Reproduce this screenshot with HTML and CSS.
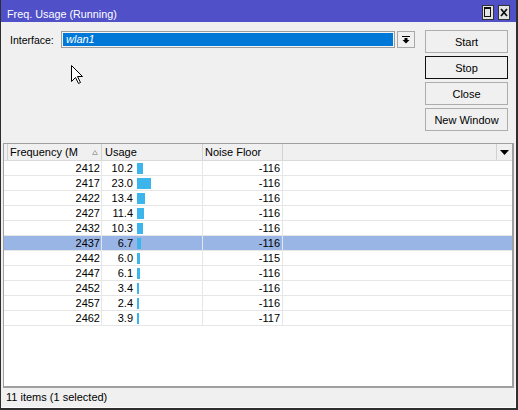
FILE: index.html
```html
<!DOCTYPE html>
<html>
<head>
<meta charset="utf-8">
<link rel="stylesheet" href="styles.css">
</head>
<body>
<div class="window">
  <div class="titlebar">
    <span class="title">Freq. Usage (Running)</span>
    <div class="tb-buttons">
      <svg class="tb-btn" width="12" height="15" viewBox="0 0 12 15"><rect x="0.5" y="0.5" width="11" height="14" fill="#e4e4e4" stroke="#333"/><rect x="2.5" y="2.5" width="6" height="9" fill="none" stroke="#111"/><line x1="2" y1="3.5" x2="9" y2="3.5" stroke="#111"/></svg>
      <svg class="tb-btn" width="12" height="15" viewBox="0 0 12 15"><rect x="0.5" y="0.5" width="11" height="14" fill="#e4e4e4" stroke="#333"/><path d="M3 4 L9 11 M9 4 L3 11" stroke="#111" stroke-width="1.8"/></svg>
    </div>
  </div>
  <div class="top">
    <div class="form">
      <span class="label">Interface:</span>
      <div class="select"><span class="sel-text">wlan1</span></div>
      <div class="drop"><svg width="8" height="8" viewBox="0 0 8 8"><rect x="0" y="0" width="8" height="1" fill="#000"/><rect x="2.5" y="2" width="3" height="2" fill="#000"/><path d="M0.5 4 L7.5 4 L4 7.5 Z" fill="#000"/></svg></div>
    </div>
    <div class="buttons">
      <button class="btn">Start</button>
      <button class="btn default">Stop</button>
      <button class="btn">Close</button>
      <button class="btn">New Window</button>
    </div>
  </div>
  <div class="table">
    <div class="thead">
      <div class="th gutter"></div>
      <div class="th freq-h"><span>Frequency (M</span><svg class="sort" width="6" height="5" viewBox="0 0 6 5"><path d="M3 0.5 L5.5 4.5 L0.5 4.5 Z" fill="none" stroke="#a8a8a8"/></svg></div>
      <div class="th usage-h">Usage</div>
      <div class="th">Noise Floor</div>
      <div class="th"></div>
      <div class="th th-drop"><svg width="9" height="5" viewBox="0 0 9 5"><path d="M0 0 L9 0 L4.5 5 Z" fill="#000"/></svg></div>
    </div>
    <div class="tbody">
      <div class="row"><div class="td num">2412</div><div class="td usage"><span class="val">10.2</span><span class="bar" style="width:6px"></span></div><div class="td noise">-116</div><div class="td last"></div></div>
      <div class="row"><div class="td num">2417</div><div class="td usage"><span class="val">23.0</span><span class="bar" style="width:14px"></span></div><div class="td noise">-116</div><div class="td last"></div></div>
      <div class="row"><div class="td num">2422</div><div class="td usage"><span class="val">13.4</span><span class="bar" style="width:8px"></span></div><div class="td noise">-116</div><div class="td last"></div></div>
      <div class="row"><div class="td num">2427</div><div class="td usage"><span class="val">11.4</span><span class="bar" style="width:7px"></span></div><div class="td noise">-116</div><div class="td last"></div></div>
      <div class="row"><div class="td num">2432</div><div class="td usage"><span class="val">10.3</span><span class="bar" style="width:6px"></span></div><div class="td noise">-116</div><div class="td last"></div></div>
      <div class="row selected"><div class="td num">2437</div><div class="td usage"><span class="val">6.7</span><span class="bar" style="width:4px"></span></div><div class="td noise">-116</div><div class="td last"></div></div>
      <div class="row"><div class="td num">2442</div><div class="td usage"><span class="val">6.0</span><span class="bar" style="width:3px"></span></div><div class="td noise">-115</div><div class="td last"></div></div>
      <div class="row"><div class="td num">2447</div><div class="td usage"><span class="val">6.1</span><span class="bar" style="width:3px"></span></div><div class="td noise">-116</div><div class="td last"></div></div>
      <div class="row"><div class="td num">2452</div><div class="td usage"><span class="val">3.4</span><span class="bar" style="width:2px"></span></div><div class="td noise">-116</div><div class="td last"></div></div>
      <div class="row"><div class="td num">2457</div><div class="td usage"><span class="val">2.4</span><span class="bar" style="width:2px"></span></div><div class="td noise">-116</div><div class="td last"></div></div>
      <div class="row"><div class="td num">2462</div><div class="td usage"><span class="val">3.9</span><span class="bar" style="width:2px"></span></div><div class="td noise">-117</div><div class="td last"></div></div>
    </div>
  </div>
  <div class="status">11 items (1 selected)</div>
  <svg class="cursor" width="13" height="20" viewBox="0 0 13 20"><path d="M0.5 0.5 L0.5 16.5 L4.5 12.5 L7.5 18.5 L9.5 17.5 L6.5 11.5 L11.5 11.5 Z" fill="#fff" stroke="#000" stroke-linejoin="miter"/></svg>
</div>
</body>
</html>
```
FILE: styles.css
```css
html, body {
  margin: 0;
  padding: 0;
  background: #f0f0f0;
}
body {
  font-family: "Liberation Sans", Arial, sans-serif;
  font-size: 11px;
  color: #000;
}
.window {
  position: relative;
  width: 518px;
  height: 410px;
  box-sizing: border-box;
  border-left: 1px solid #2e2e2e;
  border-right: 2px solid #2e2e2e;
  border-bottom: 2px solid #2e2e2e;
  background: #f0f0f0;
  display: flex;
  flex-direction: column;
}
.titlebar {
  height: 22px;
  flex: none;
  background: #5050c9;
  color: #fff;
  display: flex;
  align-items: flex-start;
  padding: 0 6px;
}
.title {
  font-size: 10.8px;
  line-height: 13px;
  padding-top: 8px;
}
.tb-buttons {
  margin-left: auto;
  display: flex;
  gap: 4px;
  padding-top: 5px;
}
.tb-btn {
  display: block;
}
.top {
  height: 121px;
  flex: none;
  box-sizing: border-box;
  display: flex;
  align-items: flex-start;
  padding: 8px 8px 0 9px;
}
.form {
  flex: 1;
  display: flex;
  align-items: center;
  height: 17px;
  margin-top: 1px;
}
.label {
  width: 51px;
  flex: none;
  font-size: 10.5px;
}
.select {
  flex: 1;
  height: 17px;
  box-sizing: border-box;
  border: 1px solid #9c9c9c;
  background: #0078d7;
  box-shadow: inset 0 0 0 1px #f4f4f4;
  color: #fff;
  padding-left: 4px;
  line-height: 15px;
}
.sel-text {
  font-style: italic;
}
.drop {
  width: 18px;
  height: 17px;
  flex: none;
  margin-left: 2px;
  box-sizing: border-box;
  border: 1px solid #a8a8a8;
  display: flex;
  align-items: center;
  justify-content: center;
}
.drop svg {
  display: block;
}
.buttons {
  width: 83px;
  flex: none;
  margin-left: 10px;
  display: flex;
  flex-direction: column;
  gap: 3px;
}
.btn {
  height: 23px;
  box-sizing: border-box;
  border: 1px solid #adadad;
  background: #f0f0f0;
  font: inherit;
  color: #000;
  padding: 0;
  margin: 0;
}
.btn.default {
  border-color: #111;
}
.table {
  flex: 1;
  min-height: 0;
  margin: 0 2px;
  border: 1px solid #a0a0a0;
  border-right-width: 2px;
  border-bottom-width: 2px;
  background: #fff;
  display: flex;
  flex-direction: column;
}
.thead {
  display: grid;
  grid-template-columns: 4px 94px 101px 80px 1fr 15px;
  height: 17px;
  flex: none;
  box-sizing: border-box;
  background: #f0f0f0;
  border-bottom: 1px solid #dadada;
}
.th {
  box-sizing: border-box;
  border-right: 1px solid #d2d2d2;
  padding-left: 2px;
  line-height: 16px;
  white-space: nowrap;
  overflow: hidden;
}
.gutter {
  padding: 0;
}
.freq-h {
  display: flex;
  align-items: center;
  justify-content: space-between;
  padding-right: 3px;
}
.sort {
  display: block;
}
.usage-h {
  padding-left: 3px;
}
.th-drop {
  border-right: none;
  padding: 0;
  display: flex;
  align-items: center;
  justify-content: center;
}
.th-drop svg {
  display: block;
}
.row {
  display: grid;
  grid-template-columns: 98px 101px 80px 1fr;
  height: 15px;
  box-sizing: border-box;
  border-bottom: 1px solid #e6e6e6;
}
.row.selected {
  background: #99b5e6;
}
.td {
  box-sizing: border-box;
  border-right: 1px solid #e6e6e6;
  line-height: 14px;
  white-space: nowrap;
}
.td.last {
  border-right: none;
}
.num {
  text-align: right;
  padding-right: 1px;
}
.usage {
  display: flex;
  align-items: center;
}
.val {
  width: 31px;
  text-align: right;
}
.bar {
  display: block;
  height: 11px;
  margin-left: 4px;
  background: #3cb4ec;
}
.noise {
  text-align: right;
  padding-right: 2px;
}
.status {
  height: 20px;
  flex: none;
  line-height: 19px;
  padding-left: 5px;
  box-shadow: inset -1px -1px 0 #fbfbfb;
}
.cursor {
  position: absolute;
  left: 70px;
  top: 65px;
}
```
